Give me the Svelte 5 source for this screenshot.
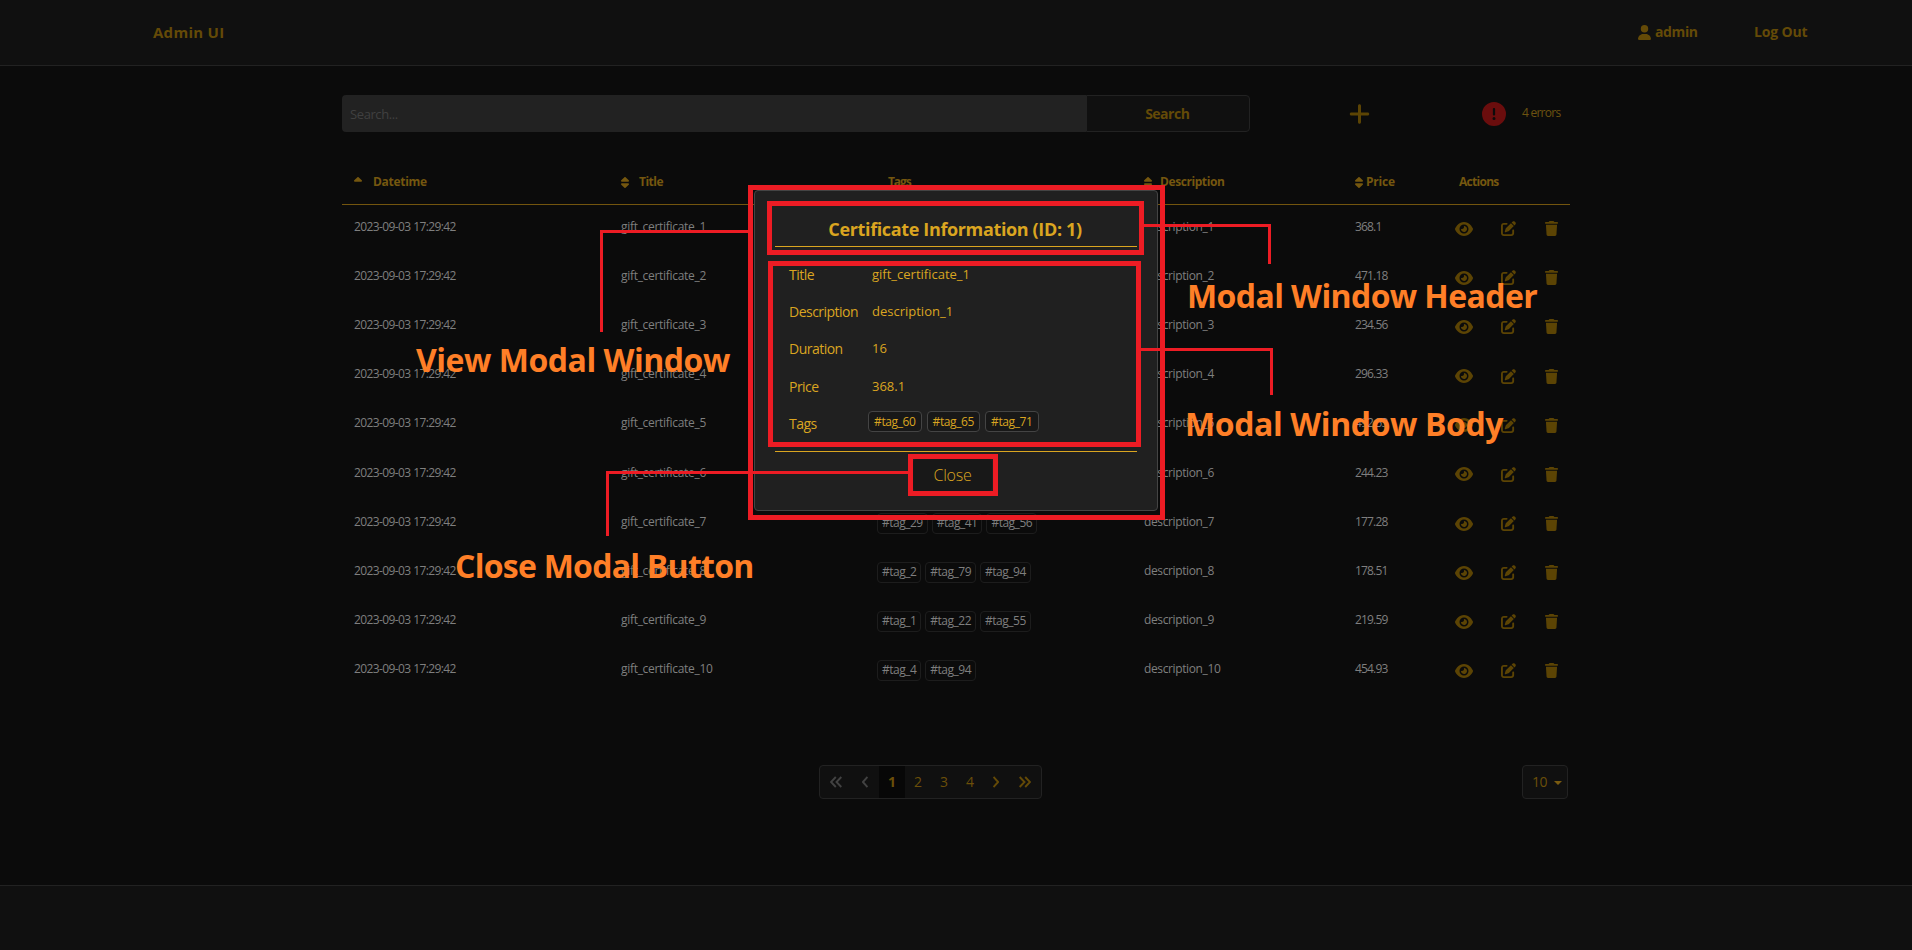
<script>
  const glyphs = {
    user: ['0 0 448 512', 'M224 256A128 128 0 1 0 224 0a128 128 0 1 0 0 256zm-45.7 48C79.8 304 0 383.8 0 482.3C0 498.7 13.3 512 29.7 512H418.3c16.4 0 29.7-13.3 29.7-29.7C448 383.8 368.2 304 269.7 304H178.3z'],
    plus: ['0 0 448 512', 'M256 80c0-17.7-14.3-32-32-32s-32 14.3-32 32V224H48c-17.7 0-32 14.3-32 32s14.3 32 32 32H192V432c0 17.7 14.3 32 32 32s32-14.3 32-32V288H400c17.7 0 32-14.3 32-32s-14.3-32-32-32H256V80z'],
    alert: ['0 0 512 512', 'M256 512A256 256 0 1 0 256 0a256 256 0 1 0 0 512zm0-384c13.3 0 24 10.7 24 24V264c0 13.3-10.7 24-24 24s-24-10.7-24-24V152c0-13.3 10.7-24 24-24zM224 352a32 32 0 1 1 64 0 32 32 0 1 1 -64 0z'],
    sort: ['0 0 320 512', 'M137.4 41.4c12.5-12.5 32.8-12.5 45.3 0l128 128c9.2 9.2 11.9 22.9 6.9 34.9s-16.6 19.8-29.6 19.8H32c-12.9 0-24.6-7.8-29.6-19.8s-2.2-25.7 6.9-34.9l128-128zm0 429.3l-128-128c-9.2-9.2-11.9-22.9-6.9-34.9s16.6-19.8 29.6-19.8H288c12.9 0 24.6 7.8 29.6 19.8s2.2 25.7-6.9 34.9l-128 128c-12.5 12.5-32.8 12.5-45.3 0z'],
    sortUp: ['0 0 320 512', 'M182.6 41.4c-12.5-12.5-32.8-12.5-45.3 0l-128 128c-9.2 9.2-11.9 22.9-6.9 34.9s16.6 19.8 29.6 19.8H288c12.9 0 24.6-7.8 29.6-19.8s2.2-25.7-6.9-34.9l-128-128z'],
    eye: ['0 0 576 512', 'M288 32c-80.8 0-145.5 36.8-192.6 80.6C48.6 156 17.3 208 2.5 243.7c-3.3 7.9-3.3 16.7 0 24.6C17.3 304 48.6 356 95.4 399.4C142.5 443.2 207.2 480 288 480s145.5-36.8 192.6-80.6c46.8-43.5 78.1-95.4 93-131.1c3.3-7.9 3.3-16.7 0-24.6c-14.9-35.7-46.2-87.7-93-131.1C433.5 68.8 368.8 32 288 32zM144 256a144 144 0 1 1 288 0 144 144 0 1 1 -288 0zm144-64c0 35.3-28.7 64-64 64c-7.1 0-13.9-1.2-20.3-3.3c-5.5-1.8-11.9 1.6-11.7 7.4c.3 6.9 1.3 13.8 3.2 20.7c13.7 51.2 66.4 81.6 117.6 67.9s81.6-66.4 67.9-117.6c-11.1-41.5-47.8-69.4-88.6-71.1c-5.8-.2-9.2 6.1-7.4 11.7c2.1 6.4 3.3 13.2 3.3 20.3z'],
    edit: ['0 0 512 512', 'M471.6 21.7c-21.9-21.9-57.3-21.9-79.2 0L362.3 51.7l97.9 97.9 30.1-30.1c21.9-21.9 21.9-57.3 0-79.2L471.6 21.7zm-299.2 220c-6.1 6.1-10.8 13.6-13.5 21.9l-29.6 88.8c-2.9 8.6-.6 18.1 5.8 24.6s15.9 8.7 24.6 5.8l88.8-29.6c8.2-2.7 15.7-7.4 21.9-13.5L437.7 172.3 339.7 74.3 172.4 241.7zM96 64C43 64 0 107 0 160V416c0 53 43 96 96 96H352c53 0 96-43 96-96V320c0-17.7-14.3-32-32-32s-32 14.3-32 32v96c0 17.7-14.3 32-32 32H96c-17.7 0-32-14.3-32-32V160c0-17.7 14.3-32 32-32h96c17.7 0 32-14.3 32-32s-14.3-32-32-32H96z'],
    trash: ['0 0 448 512', 'M135.2 17.7L128 32H32C14.3 32 0 46.3 0 64S14.3 96 32 96H416c17.7 0 32-14.3 32-32s-14.3-32-32-32H320l-7.2-14.3C307.4 6.8 296.3 0 284.2 0H163.8c-12.1 0-23.2 6.8-28.6 17.7zM416 128H32L53.2 467c1.6 25.3 22.6 45 47.9 45H346.9c25.3 0 46.3-19.7 47.9-45L416 128z']
  };

  const columns = [
    { label: 'Datetime', icon: 'sortUp', gap: 11, spacing: -0.3 },
    { label: 'Title', icon: 'sort', gap: 10, spacing: -0.5 },
    { label: 'Tags', indent: 11, spacing: -1.1 },
    { label: 'Description', icon: 'sort', gap: 8, spacing: -0.42 },
    { label: 'Price', icon: 'sort', gap: 3, spacing: -0.2 },
    { label: 'Actions', indent: 4, spacing: -0.72 }
  ];

  const prices = ['368.1', '471.18', '234.56', '296.33', '492.53', '244.23', '177.28', '178.51', '219.59', '454.93'];
  const rowTags = { 7: ['29', '41', '56'], 8: ['2', '79', '94'], 9: ['1', '22', '55'], 10: ['4', '94'] };
  const rows = prices.map((price, i) => ({ id: i + 1, price, tags: rowTags[i + 1] ?? [] }));

  const details = [
    ['Title', 'gift_certificate_1'],
    ['Description', 'description_1'],
    ['Duration', '16'],
    ['Price', '368.1']
  ];
</script>

{#snippet icon(name, cls)}
  <svg class={cls} viewBox={glyphs[name][0]} fill="currentColor"><path d={glyphs[name][1]} /></svg>
{/snippet}

<div class="page">
  <header>
    <span class="brand">Admin UI</span>
    <nav>
      <span class="account">{@render icon('user', 'user')}<b class="name">admin</b></span>
      <b class="logout">Log Out</b>
    </nav>
  </header>

  <main>
    <div class="toolbar">
      <div class="field">Search...</div>
      <div class="search">Search</div>
      {@render icon('plus', 'plus')}
      {@render icon('alert', 'alert')}
      <span class="errors">4 errors</span>
    </div>

    <div class="cols head">
      {#each columns as c}
        <div class="th" style="gap:{c.gap ?? 0}px;padding-left:{c.indent ?? 0}px;letter-spacing:{c.spacing}px">
          {#if c.icon}{@render icon(c.icon, 'sort')}{/if}<span>{c.label}</span>
        </div>
      {/each}
    </div>

    {#each rows as r}
      <div class="cols row">
        <div class="date">2023-09-03 17:29:42</div>
        <div>gift_certificate_{r.id}</div>
        <div class="tags">
          {#each r.tags as t}<span class="tag">#tag_{t}</span>{/each}
        </div>
        <div class="desc">description_{r.id}</div>
        <div class="price">{r.price}</div>
        <div class="actions">
          {@render icon('eye', 'eye')}
          {@render icon('edit', 'edit')}
          {@render icon('trash', 'trash')}
        </div>
      </div>
    {/each}

    <div class="bottom">
      <div class="pager">
        <svg class="first" viewBox="0 0 12 12"><path d="M5.8 1L1 6l4.8 5M11.3 1L6.5 6l4.8 5" /></svg>
        <svg class="prev" viewBox="0 0 6 12"><path d="M5.5 1L.9 6l4.6 5" /></svg>
        <b>1</b><span>2</span><span>3</span><span>4</span>
        <svg class="next" viewBox="0 0 6 12"><path d="M.5 1l4.6 5L.5 11" /></svg>
        <svg class="last" viewBox="0 0 12 12"><path d="M.7 1l4.8 5L.7 11M6.2 1L11 6l-4.8 5" /></svg>
      </div>
      <div class="size"><span>10</span><i></i></div>
    </div>
  </main>

  <footer></footer>

  <section class="modal">
    <h2>Certificate Information (ID: 1)</h2>
    <div class="body">
      {#each details as [label, value]}
        <div class="line"><span class="label">{label}</span><span class="value">{value}</span></div>
      {/each}
      <div class="line">
        <span class="label">Tags</span>
        <span class="badges">
          {#each ['60', '65', '71'] as t}<span class="badge">#tag_{t}</span>{/each}
        </span>
      </div>
    </div>
    <div class="close">Close</div>
  </section>

  <div class="frame window"></div>
  <div class="frame top"></div>
  <div class="frame middle"></div>
  <div class="frame button"></div>
  <div class="lead left l1"></div>
  <div class="lead left l2"></div>
  <div class="lead right l3"></div>
  <div class="lead right l4"></div>
  <div class="note n1">View Modal Window</div>
  <div class="note n2">Close Modal Button</div>
  <div class="note n3">Modal Window Header</div>
  <div class="note n4">Modal Window Body</div>
</div>

<style>
  :global(body) { background: #0b0b0b; }
  .page {
    position: relative;
    width: 1912px;
    height: 950px;
    overflow: hidden;
    display: flex;
    flex-direction: column;
    background: #0b0b0b;
    color: #6b4f09;
    font: 12px/18px "Open Sans", sans-serif;
    white-space: nowrap;
  }
  .page * { box-sizing: border-box; }
  svg { display: block; flex: none; }

  header {
    height: 66px;
    flex: none;
    display: flex;
    align-items: center;
    justify-content: space-between;
    padding: 0 105px 0 153px;
    background: #101010;
    border-bottom: 1px solid #222;
    color: #644a07;
  }
  .brand { font-weight: 700; font-size: 15px; letter-spacing: 0.27px; margin-top: -2px; }
  nav { display: flex; gap: 56px; font-size: 14px; }
  .account { display: flex; align-items: center; gap: 4px; }
  .user { width: 13px; height: 15px; }
  .name, .logout { margin-top: -1px; }
  .name { letter-spacing: -0.38px; width: 43px; }
  .logout { letter-spacing: -0.15px; width: 53px; }

  main { width: 1228px; margin-left: 342px; flex: 1; display: flex; flex-direction: column; }
  .toolbar { display: flex; align-items: center; height: 37px; margin-top: 29px; }
  .field {
    width: 743.5px; height: 37px; padding-left: 8px;
    background: #222; color: #404040; border-radius: 4px 0 0 4px;
    font-size: 13px; line-height: 39px; letter-spacing: -0.4px;
  }
  .search {
    width: 164.5px; height: 37px; padding-right: 1px; background: #101010; border: 1px solid #222; border-radius: 0 4px 4px 0;
    color: #644a07; font-weight: 700; font-size: 14px; line-height: 36px; letter-spacing: -0.5px; text-align: center;
  }
  .plus { width: 21px; height: 24px; margin-left: 99px; color: #5c4404; }
  .alert { width: 24px; height: 24px; margin-left: 112px; color: #6a0d0d; }
  .errors { margin: -1px 0 0 16px; letter-spacing: -0.75px; color: #6d5310; }

  .cols { display: grid; grid-template-columns: 267px 256px 267px 211px 100px 115px; padding-left: 12px; }
  .head { height: 73px; flex: none; border-bottom: 1px solid #73550e; color: #75570f; font-weight: 700; }
  .th { display: flex; align-items: center; height: 18px; margin-top: 41px; }
  .sort { width: 8px; height: 13px; }

  .row { height: 49.15px; flex: none; color: #7f7f7f; padding-top: 12.9px; letter-spacing: -0.3px; }
  .date { letter-spacing: -0.6px; }
  .desc { letter-spacing: -0.38px; }
  .price { letter-spacing: -0.82px; }
  .tags { display: flex; gap: 4px; }
  .tag {
    height: 21px; margin-top: 0.2px; padding: 0 4px; line-height: 18px; letter-spacing: -0.5px;
    border: 1px solid #1d1d1d; border-radius: 4px;
  }
  .actions { display: flex; align-items: center; height: 16px; margin-top: 2.8px; color: #5c4404; }
  .eye { width: 18px; height: 16px; }
  .edit { width: 15px; height: 15px; margin-left: 28px; }
  .trash { width: 13px; height: 15px; margin-left: 29px; }

  .bottom { display: flex; justify-content: space-between; margin: auto 2px 86px 477px; height: 34px; }
  .pager, .size { background: #101010; border: 1px solid #222; border-radius: 4px; display: flex; align-items: center; font-size: 14px; }
  .pager { width: 223px; height: 34px; }
  .pager b { width: 26px; height: 32px; line-height: 32px; text-align: center; background: #070707; }
  .pager span { width: 26px; text-align: center; }
  .pager svg { fill: none; stroke: #644a07; stroke-width: 1.9; height: 12px; }
  .pager .first { width: 12px; margin: 0 20px 0 10px; stroke: #424242; }
  .pager .prev { width: 6px; margin-right: 11px; stroke: #424242; }
  .pager .next { width: 6px; margin: 0 20px 0 10px; }
  .pager .last { width: 12px; }
  .size { width: 46px; height: 34px; padding-left: 9px; gap: 7px; letter-spacing: -0.6px; }
  .size i { border: 4px solid transparent; border-top-color: #7a5b10; border-bottom: 0; margin-top: 2px; }

  footer { height: 65px; flex: none; background: #101010; border-top: 1px solid #222; }

  .modal {
    position: absolute; left: 754px; top: 190px; width: 404px; height: 321px;
    padding: 26px 20px 0; background: #202020; border: 1px solid #444; border-radius: 4px;
    color: #daa520;
  }
  h2 { margin: 0; height: 30px; padding-right: 2px; border-bottom: 1px solid #daa520; font: 700 18px/24px "Open Sans", sans-serif; letter-spacing: -0.36px; text-align: center; }
  .body { height: 205px; padding: 9px 0 0 14px; border-bottom: 1px solid #daa520; }
  .line { display: flex; align-items: center; height: 37.3px; }
  .label { width: 83px; font-size: 14px; letter-spacing: -0.52px; }
  .value { font-size: 13px; margin-top: -2px; }
  .badges { display: flex; gap: 5px; margin: -5px 0 0 -4px; }
  .badge { width: 53.5px; height: 21px; border: 1px solid #444; border-radius: 4px; background: #181818; line-height: 19px; text-align: center; letter-spacing: -0.4px; }
  .close { width: 79px; height: 32px; margin: 7px 0 0 138px; background: #181818; border-radius: 4px; text-align: center; font-size: 16px; font-weight: 300; line-height: 33px; letter-spacing: -0.2px; }

  .frame { position: absolute; border: 5px solid #ed1c24; }
  .window { left: 748px; top: 185px; width: 417px; height: 335px; }
  .top { left: 767px; top: 201px; width: 377px; height: 54px; }
  .middle { left: 768px; top: 261px; width: 373px; height: 186px; }
  .button { left: 908px; top: 454px; width: 90px; height: 42px; }
  .lead { position: absolute; border-top: 3px solid #ed1c24; }
  .left { border-left: 3px solid #ed1c24; }
  .right { border-right: 3px solid #ed1c24; }
  .l1 { left: 600px; top: 230px; width: 148px; height: 102px; }
  .l2 { left: 606px; top: 471px; width: 302px; height: 65px; }
  .l3 { left: 1144px; top: 224px; width: 127px; height: 40px; }
  .l4 { left: 1141px; top: 348px; width: 132px; height: 47px; }
  .note { position: absolute; color: #ff7f27; font-weight: 700; font-size: 32px; line-height: 40px; }
  .n1 { left: 416px; top: 340px; letter-spacing: -0.48px; }
  .n2 { left: 455px; top: 546px; letter-spacing: -0.74px; }
  .n3 { left: 1187px; top: 276px; letter-spacing: -0.6px; }
  .n4 { left: 1185px; top: 404px; letter-spacing: -0.4px; }
</style>
